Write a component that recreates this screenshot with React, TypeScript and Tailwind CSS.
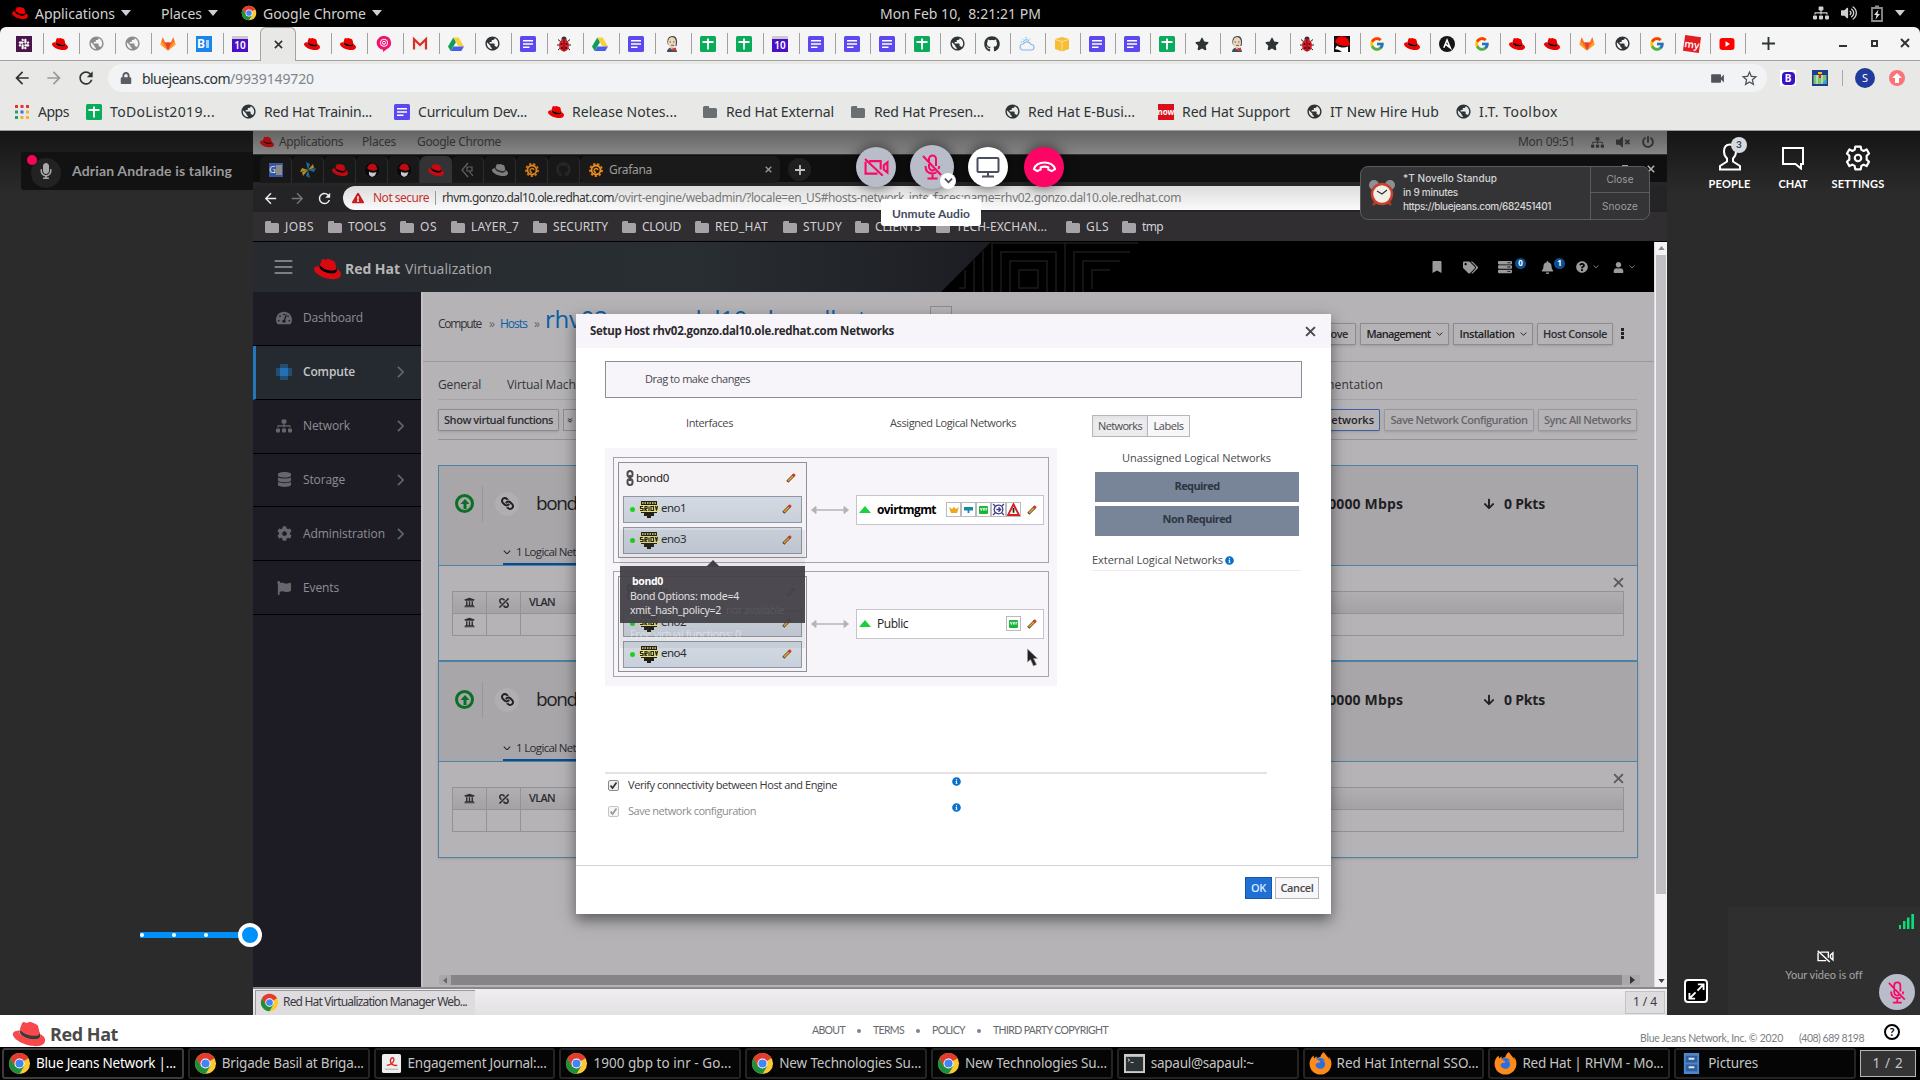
import React, { useLayoutEffect, useRef } from 'react';
import { FaCog, FaDatabase, FaFlag, FaGithub, FaLink, FaLock, FaSlack, FaStar, FaTachometerAlt, FaUniversity, FaUnlink, FaUser, FaBell, FaBookmark, FaTags, FaQuestionCircle, FaInfoCircle, FaExclamationTriangle, FaSitemap, FaVolumeUp, FaVolumeMute, FaPowerOff, FaArrowDown, FaMicrophone, FaServer, FaFirefoxBrowser } from 'react-icons/fa';
import { FcGoogle } from 'react-icons/fc';
import { MdArrowBack, MdArrowForward, MdPublic, MdRefresh, MdVideocam, MdStarBorder } from 'react-icons/md';

/* Single-line text stretched by letter spacing to a given width. */
function Fit({ w, className = '', children }: { w: number; className?: string; children: React.ReactNode }) {
  const ref = useRef<HTMLSpanElement>(null);
  useLayoutEffect(() => {
    const el = ref.current;
    if (!el) return;
    el.style.letterSpacing = '0px';
    const n = (el.textContent || '').length;
    el.style.letterSpacing = `${(w - el.getBoundingClientRect().width) / n}px`;
  }, [w]);
  return <span ref={ref} className={`inline-block shrink-0 whitespace-pre ${className}`}>{children}</span>;
}

function Hat({ className = 'size-4', color = '#ee0000', band = '#000' }: { className?: string; color?: string; band?: string }) {
  return (
    <svg viewBox="0 50 512 412" className={`shrink-0 ${className}`}>
      <path fill={band} d="M104 196c-12 60 90 150 230 150 60 0 110-20 100-64l-10-48z" />
      <path fill={color} d="M341.52 285.56c33.65 0 82.34-6.94 82.34-47 .22-6.74.86-1.82-20.88-96.24-4.62-19.15-8.68-27.84-42.31-44.65-26.09-13.34-82.92-35.37-99.73-35.37-15.66 0-20.2 20.17-38.87 20.17-18 0-31.31-15.06-48.12-15.06-16.14 0-26.66 11-34.78 33.62-27.5 77.55-26.28 74.27-26.12 78.27 0 24.8 97.64 106.11 228.47 106.11M429 254.84c4.65 22 4.65 24.35 4.65 27.25 0 37.66-42.33 58.56-98 58.56-125.74.08-235.91-73.65-235.91-122.33a49.55 49.55 0 0 1 4.06-19.72C58.56 200.86 0 208.93 0 260.63c0 84.67 200.63 189 359.49 189 121.79 0 152.51-55.08 152.51-98.58 0-34.21-29.59-73.05-82.93-96.24" />
    </svg>
  );
}
function Chrome({ className = 'size-4' }: { className?: string }) {
  return (
    <svg viewBox="0 0 48 48" className={`shrink-0 ${className}`}>
      <circle cx="24" cy="24" r="22" fill="#fbc934" />
      <path fill="#e33b2e" d="M24 24 43 13H24zM5 13a22 22 0 0 1 38 0H24L14 30z" />
      <path fill="#1e8e3e" d="M5 13a22 22 0 0 0 19 33l10-17-10 4-9.5-3.500z" />
      <circle cx="24" cy="24" r="10.500" fill="#fff" />
      <circle cx="24" cy="24" r="8.500" fill="#4285f4" />
    </svg>
  );
}
const Globe = ({ c = 'text-[#2e3436]' }: { c?: string }) => <MdPublic className={`size-[17px] shrink-0 ${c}`} />;
const Doc = () => (
  <svg viewBox="0 0 16 16" className="size-4"><rect width="16" height="16" rx="1.500" fill="#5b48ee" /><path stroke="#fff" strokeWidth="1.600" d="M3 4.800h10M3 8h10M3 11.300h6.500" /></svg>
);
const Sheet = () => (
  <svg viewBox="0 0 16 16" className="size-4"><rect width="16" height="16" rx="1.500" fill="#0bab5c" /><path stroke="#fff" strokeWidth="1.800" d="M2.500 6h11M8 2.500v11" /></svg>
);
const Slack = () => <span className="flex size-4 items-center justify-center bg-[#4a154b] text-white"><FaSlack size={12} /></span>;
const Gitlab = () => (
  <svg viewBox="0 0 16 16" className="size-[17px]"><path fill="#fc6d26" d="M8 15 .5 9 2.700 1.500 5.200 7h5.600l2.500-5.500L15.500 9z" /><path fill="#e24329" d="M8 15 5.200 7h5.600z" /><path fill="#fca326" d="M.5 9 1.800 6 8 15zM15.500 9l-1.300-3L8 15z" /></svg>
);
const BBlue = () => (
  <span className="flex size-4 items-center justify-center bg-[#1a85e8] pr-0.5 font-['Roboto'] text-[12px] font-bold text-white">B<i className="ml-px h-2 w-[3px] bg-[#9fd4ff]" /></span>
);
const Cal = () => (
  <span className="flex size-4 flex-col"><i className="h-[3px] bg-[#c9c9cf]" /><b className="flex h-[13px] items-center justify-center bg-[#4a10c8] font-['Noto_Sans'] text-[10px] font-semibold text-white">10</b></span>
);
const At = () => (
  <svg viewBox="0 0 16 16" className="size-4"><path fill="#f0146e" d="M8 0a6.800 6.800 0 0 1 3 13L7 16v-2.300A6.800 6.800 0 0 1 8 0z" /><circle cx="8" cy="6.800" r="3.600" fill="none" stroke="#fff" strokeWidth="1" /><circle cx="8" cy="6.800" r="1.500" fill="none" stroke="#fff" strokeWidth="1" /></svg>
);
const Gmail = () => (
  <svg viewBox="0 0 16 16" className="size-4"><path fill="#eee" d="M1 2.500h14v11H1z" /><path fill="none" stroke="#d93025" strokeWidth="2.200" d="M2 13.500V3.200L8 9l6-5.800v10.300" /></svg>
);
const Drive = () => (
  <svg viewBox="0 0 16 16" className="size-4"><path fill="#0f9d58" d="M5.300 1.500 0 10.500 2.700 15 8 6z" /><path fill="#fbcf3a" d="M5.300 1.500h5.400l5.300 9h-5.400z" /><path fill="#4a5fe8" d="M5.400 10.500H16L13.300 15H2.700z" /></svg>
);
const Bug = () => (
  <svg viewBox="0 0 16 16" className="size-4"><path stroke="#222" strokeWidth="1" d="M2 3.500 5 6M14 3.500 11 6M1 9h3M15 9h-3M2 14l3-2.500M14 14l-3-2.500" /><circle cx="8" cy="3" r="2.500" fill="#333" /><ellipse cx="8" cy="9.300" rx="5" ry="6.200" fill="#d8202c" /><path stroke="#500" strokeWidth=".8" d="M8 3.500v12" /><g fill="#400"><circle cx="5.500" cy="8" r="1" /><circle cx="10.500" cy="8" r="1" /><circle cx="6" cy="12" r="1" /><circle cx="10" cy="12" r="1" /></g></svg>
);
const Jenkins = () => (
  <svg viewBox="0 0 16 16" className="size-4"><path fill="#33444d" d="M4 9C2 3 5 0 8.500 0S14 3 12.500 10z" /><ellipse cx="8" cy="6.500" rx="4" ry="5.600" fill="#f0d6b7" /><path fill="#335061" d="M3 16c0-3 2-4.500 5-4.500s5 1.500 5 4.500z" /><path fill="#fff" d="M6 11.500h5l-2 3z" /><path fill="#d33833" d="M8 12.500 12 11.500v3.500L8 14zM8 13l-2-1v2z" /><path stroke="#444" strokeWidth=".8" d="M5.500 6h1.500M9 6h1.500M7 9.300h3" /></svg>
);
const Cloud = () => (
  <svg viewBox="0 0 16 16" className="size-4" fill="none"><path stroke="#8fb4f4" strokeWidth="1.200" d="M4 14a3 3 0 0 1 0-6 4.500 4.500 0 0 1 8 .5 2.700 2.700 0 0 1 .5 5.500z" /><path stroke="#54c8dc" d="M4 6a3.500 3.500 0 0 1 6-1M7 1v1.500M3 2.500l1 1M11 2.500l-1 1M1.500 6H3" /></svg>
);
const Box = () => (
  <svg viewBox="0 0 16 16" className="size-4"><path fill="#f6bd35" d="M1 3 8 1l7 2v10l-7 2.500L1 13z" /><path stroke="#fce8b0" strokeWidth=".8" fill="none" d="M1 3.500 8 5.500l7-2M8 5.500V15" /></svg>
);
const Shadow = () => (
  <svg viewBox="0 0 16 16" className="size-4"><path fill="#111" d="M0 0h16v16H0z" /><path fill="#fff" d="M3 9.500c3 2.500 8 2.500 11 1V16H8l-3-2-4-1z" /><path fill="#e00" d="M3 2c3-3 9-2 11 1 1 3 2 4 2 6C12 11 5 10 1 6z" /></svg>
);
const Shadowman = () => (
  <svg viewBox="0 0 16 16" className="size-4"><circle cx="8" cy="8" r="7" fill="#080808" /><path fill="#ddd" d="M5 9.500c2 1.500 5 1.500 7.500.5L11 13.500l-3 1.500-3-2z" /><path fill="#d40a12" d="M5 3c2-2 6-1.500 7 .5l1.500 4C10.500 9.500 6 9 3 6z" /></svg>
);
const Ansible = () => (
  <svg viewBox="0 0 16 16" className="size-4"><circle cx="8" cy="8" r="8" fill="#151515" /><path fill="none" stroke="#fff" strokeWidth="1.600" d="M4.800 11.800 8 4l3.200 7.800L6.300 8" /></svg>
);
const My = () => <span className="flex size-4 rotate-[8deg] items-center justify-center bg-[#e51b23] font-['Noto_Sans'] text-[10px] font-semibold text-white">my</span>;
const Tube = () => (
  <svg viewBox="0 0 16 16" className="size-4"><rect x=".5" y="2" width="15" height="12" rx="3" fill="#f00" /><path fill="#fff" d="m6.500 5.300 4.500 2.700-4.500 2.700z" /></svg>
);
const Star = () => <FaStar size={14} className="text-[#2e3436]" />;
const Tri = ({ className = '' }: { className?: string }) => (
  <svg viewBox="0 0 10 6" className={`h-[6px] w-[10px] shrink-0 ${className}`}><path fill="#cfcfcf" d="M0 0h10L5 6z" /></svg>
);
const Cross = ({ className = '', s = 2 }: { className?: string; s?: number }) => (
  <svg viewBox="0 0 10 10" className={`shrink-0 ${className}`} fill="none" stroke="currentColor" strokeWidth={s}><path d="m1 1 8 8M9 1 1 9" /></svg>
);
const Chev = ({ className = '' }: { className?: string }) => (
  <svg viewBox="0 0 10 6" className={`shrink-0 ${className}`} fill="none" stroke="currentColor" strokeWidth="1.400"><path d="m1 .8 4 4 4-4" /></svg>
);
const CamOff = ({ className = '' }: { className?: string }) => (
  <svg viewBox="0 0 24 18" className={className} fill="none" stroke="currentColor" strokeWidth="2"><path d="M5 3h11v8M13 15H1.500V3.500M1 1l17 16M19 7l3.500-3v10L19 11z" /></svg>
);
const MicOff = ({ className = '' }: { className?: string }) => (
  <svg viewBox="0 0 20 26" className={className} fill="none" stroke="currentColor" strokeWidth="2"><path d="M7 9V5a3.500 3.500 0 0 1 7 0v7M7 10v3a3.500 3.500 0 0 0 5.500 2.800M3.500 12c0 5 3 7.500 7 7.500 1.800 0 3-.4 4-1.200M16.500 15l.9-3M10.500 20v4.500M5.500 24.500h10M1 2l18 19" /></svg>
);

function TopBar() {
  return (
    <div className="flex h-[27px] items-center bg-black pb-px pl-3 font-['Noto_Sans'] text-[14px] text-[#d0d0d0]">
      <Hat className="h-[14px] w-4" />
      <Fit w={80} className="ml-[7px]">Applications</Fit><Tri className="ml-1.5" />
      <Fit w={41} className="ml-[30px]">Places</Fit><Tri className="ml-1.5" />
      <Chrome className="ml-[23px] size-4" /><Fit w={103} className="ml-[6px]">Google Chrome</Fit><Tri className="ml-1.5" />
      <Fit w={161} className="ml-[498px]">Mon Feb 10,  8:21:21 PM</Fit>
      <div className="ml-auto flex items-center pr-[15px]">
        <FaSitemap size={16} /><FaVolumeUp size={16} className="ml-3" />
        <svg viewBox="0 0 12 17" className="ml-[14px] h-[17px] w-3" fill="none"><path stroke="#8c8c8c" strokeWidth="1.800" d="M4 1.500h4M1 3h10v13H1z" /><path fill="#ddd" d="M7.500 4.500 3 10h2.500L4.500 14.500 9 9H6.500z" /></svg>
        <Tri className="ml-3" />
      </div>
    </div>
  );
}

const g = 'text-[#8c8c8c]';
const wideTabs = [<Slack />, <Hat />, <Globe c={g} />, <Globe c={g} />, <Gitlab />, <BBlue />, <Cal />, null, <Hat />, <Hat />, <At />, <Gmail />, <Drive />, <Globe />, <Doc />, <Bug />, <Drive />, <Doc />, <Jenkins />, <Sheet />, <Sheet />, <Cal />, <Doc />];
const slimTabs = [<Doc />, <Doc />, <Sheet />, <Globe />, <FaGithub size={16} />, <Cloud />, <Box />, <Doc />, <Doc />, <Sheet />, <Star />, <Jenkins />, <Star />, <Bug />, <Shadow />, <FcGoogle size={16} />, <Hat />, <Ansible />, <FcGoogle size={16} />, <Hat />, <Hat />, <Gitlab />, <Globe />, <FcGoogle size={16} />, <My />, <Tube />];

function Tabs() {
  return (
    <div className="flex h-[34px] bg-black">
      <div className="flex h-[34px] w-full rounded-t-[6px] border-b border-[#a3a3a1] bg-[#f5f5f5] pl-2 text-[#2e3436]">
        {wideTabs.map((icon, i) =>
          icon ? (
            <div key={i} className="flex w-9 shrink-0 items-center pl-2">
              <div className="flex w-4 justify-center">{icon}</div>
              {i !== 6 && <i className="ml-auto h-[21px] w-px bg-[#a0a0a0]" />}
            </div>
          ) : (
            <div key={i} className="flex h-[34px] w-9 shrink-0 items-center justify-center rounded-t-[6px] border border-b-0 border-[#a3a3a1] bg-[#e8e8e6]">
              <Cross className="size-[9px]" s={1.8} />
            </div>
          ),
        )}
        {slimTabs.map((icon, i) => (
          <div key={i} className="flex w-[35px] shrink-0 items-center pl-2">
            <div className="flex w-4 justify-center">{icon}</div>
            <i className="ml-auto h-[21px] w-px bg-[#a0a0a0]" />
          </div>
        ))}
        <svg viewBox="0 0 14 14" className="mt-[10px] ml-[16px] size-[13px]" stroke="currentColor" strokeWidth="2"><path d="M7 0v14M0 7h14" /></svg>
        <i className="mt-[18px] ml-[64px] h-[2px] w-2 bg-[#2e3436]" />
        <i className="mt-[13px] ml-[24px] size-[7px] border-2 border-[#2e3436]" />
        <Cross className="mt-[11px] ml-[22px] size-[10px]" s={2} />
      </div>
    </div>
  );
}

function Toolbar() {
  return (
    <div className="flex h-8 items-center bg-[#e8e8e6] pt-[2px] pl-3 font-['Noto_Sans'] text-[14px] text-[#2e3436]">
      <MdArrowBack size={20} /><MdArrowForward size={20} className="ml-3 text-[#9a9a9a]" /><MdRefresh size={20} className="ml-3" />
      <div className="ml-[12px] flex h-7 w-[1659px] items-center rounded-full bg-[#f1f3f4] pl-[12px]">
        <FaLock size={12} className="text-[#5a5d66]" />
        <Fit w={88} className="ml-[10px]">bluejeans.com</Fit><Fit w={84} className="text-[#80858a]">/9939149720</Fit>
        <MdVideocam size={17} className="ml-auto text-[#50545a]" /><MdStarBorder size={19} className="mr-[8px] ml-[14px] text-[#50545a]" />
      </div>
      <span className="ml-[13px] flex size-4 items-center justify-center bg-white"><b className="flex size-[13px] items-center justify-center rounded-sm bg-[#3a10c8] text-[10px] text-white">B</b></span>
      <svg viewBox="0 0 16 16" className="ml-4 size-4"><path fill="#1c3f8c" d="M0 0h16v16H0z" /><path fill="#7cc36a" d="M1.500 5h13v9h-13z" /><path fill="#3f9be0" d="m9 14 5.500-5v5z" /><path stroke="#eee" d="M5 5v9M10 5v9" /><path fill="#f4c327" d="M6 2h4v2H6z" /><path fill="#d22" d="M7 4h2v4H7z" /></svg>
      <i className="ml-[14px] h-4 w-px bg-[#a9a9a9]" />
      <span className="ml-3 flex size-5 items-center justify-center rounded-full bg-[#1f3b9c] text-[11px] text-white">S</span>
      <span className="ml-[14px] flex size-4 items-center justify-center rounded-full bg-[#fb7377]"><svg viewBox="0 0 10 10" className="size-2.5" fill="#fff"><path d="M5 0l5 5H7v5H3V5H0z" /></svg></span>
    </div>
  );
}

const Apps = () => (
  <svg viewBox="0 0 14 14" className="size-[14px]"><path fill="#e0392c" d="M0 0h3v3H0zM5.500 0h3v3h-3zM11 0h3v3h-3z" /><path fill="#1ea362" d="M0 5.500h3v3H0z" /><path fill="#4a66e8" d="M5.500 5.500h3v3h-3z" /><path fill="#f4b32c" d="M11 5.500h3v3h-3zM5.500 11h3v3h-3zM11 11h3v3h-3z" /><path fill="#1ea362" d="M0 11h3v3H0z" /></svg>
);
const Fold = ({ className = '' }: { className?: string }) => (
  <svg viewBox="0 0 14 12" className={`h-[12px] w-[14px] ${className}`} fill="currentColor"><path d="M0 1.500Q0 0 1.500 0H6v2h6.500Q14 2 14 3.500v7q0 1.500-1.500 1.500h-11Q0 12 0 10.500z" /></svg>
);
const marks: [React.ReactNode, string, number, string][] = [
  [<Apps />, 'Apps', 31, 'w-[72px]'],
  [<Sheet />, 'ToDoList2019...', 105, 'w-[154px]'],
  [<Globe />, 'Red Hat Trainin...', 108, 'w-[154px]'],
  [<Doc />, 'Curriculum Dev...', 109, 'w-[154px]'],
  [<Hat />, 'Release Notes...', 105, 'w-[154px]'],
  [<Fold className="text-[#6a6f73]" />, 'Red Hat External', 108, 'w-[148px]'],
  [<Fold className="text-[#6a6f73]" />, 'Red Hat Presen...', 110, 'w-[154px]'],
  [<Globe />, 'Red Hat E-Busi...', 107, 'w-[154px]'],
  [<span className="flex size-4 items-center justify-center bg-[#d9101c] text-[8px] font-bold text-white">now</span>, 'Red Hat Support', 108, 'w-[148px]'],
  [<Globe />, 'IT New Hire Hub', 109, 'w-[149px]'],
  [<Globe />, 'I.T. Toolbox', 79, 'w-[149px]'],
];
function Bookmarks() {
  return (
    <div className="flex h-[38px] items-center border-b border-[#9a9a98] bg-[#e8e8e6] pl-[14px] font-['Noto_Sans'] text-[14px] text-[#2e3436]">
      {marks.map(([icon, t, w, cls]) => (
        <div key={t} className={`flex shrink-0 items-center ${cls}`}>
          <div className="flex w-4 justify-center">{icon}</div>
          <Fit w={w} className="ml-2">{t}</Fit>
        </div>
      ))}
    </div>
  );
}

const Grafana = () => (
  <svg viewBox="0 0 16 16" className="size-4" fill="none"><circle cx="8" cy="8" r="6" stroke="#e8761c" strokeWidth="2" strokeDasharray="2.300 1.800" /><circle cx="8" cy="8" r="4.500" stroke="#e9951c" strokeWidth="1.800" /><path stroke="#e8861c" strokeWidth="1.500" d="M10 8a2 2 0 1 0-2 2.500" /></svg>
);
const remoteTabs = [
  <span className="flex size-3.5 items-center justify-center bg-[#3e5fb0] text-[9px] text-white">G<i className="h-2.5 w-1.5 bg-[#9a9a9a]" /></span>,
  <svg viewBox="0 0 16 16" className="size-4"><path fill="#2272a8" d="M8 8 6 0l4 2zM8 8l8-2-2 4zM8 8l2 8-4-2z" /><path fill="#c09a2c" d="M8 8 0 10l2-4zM8 8l5-6 1 4zM8 8l-5 6-1-4z" /></svg>,
  <Hat color="#d40a12" />,
  <Shadowman />,
  <Shadowman />,
  <Hat color="#c40a12" />,
  <svg viewBox="0 0 16 16" className="size-4" fill="none" stroke="#6c6c6c" strokeWidth="1.200"><path d="M8 1 2 8l6 7M7 5h5v4H7zM9 9l4 5" /></svg>,
  <Hat color="#8b8b8b" band="#333" />,
  <Grafana />,
  <FaGithub size={15} className="text-[#2a2a2a]" />,
];
function RemoteBrowser() {
  const folders: [string, number, string][] = [['JOBS', 29, 'w-[63px]'], ['TOOLS', 38, 'w-[72px]'], ['OS', 17, 'w-[51px]'], ['LAYER_7', 48, 'w-[82px]'], ['SECURITY', 55, 'w-[89px]'], ['CLOUD', 39, 'w-[73px]'], ['RED_HAT', 53, 'w-[88px]'], ['STUDY', 39, 'w-[72px]'], ['CLIENTS', 46, 'w-[81px]'], ['TECH-EXCHAN...', 91, 'w-[130px]'], ['GLS', 23, 'w-[56px]'], ['tmp', 21, 'w-[56px]']];
  return (
    <div className="flex h-[111px] flex-col font-['Noto_Sans']">
      <div className="flex h-[23px] items-center bg-gradient-to-b from-[#646464] to-[#868686] pb-px pl-[7px] text-[12px] text-[#323232]">
        <Hat className="h-3 w-3.5" color="#a80d12" band="#400" />
        <Fit w={64} className="ml-[5px]">Applications</Fit><Fit w={34} className="ml-[19px]">Places</Fit><Fit w={84} className="ml-[21px]">Google Chrome</Fit>
        <div className="ml-auto flex items-center pr-[13px]"><Fit w={57}>Mon 09:51</Fit><FaSitemap size={13} className="ml-4" /><FaVolumeMute size={14} className="ml-3" /><FaPowerOff size={12} className="ml-3" /></div>
      </div>
      <div className="flex h-[32px] items-start border-t border-[#333] border-b-4 border-b-[#262628] bg-[#0f0f10] pl-[7px] pt-px">
        {remoteTabs.map((icon, i) => (
          <div key={i} className={i === 5 ? 'flex h-[27px] w-8 shrink-0 items-center justify-center rounded-t-md bg-[#333336]' : 'flex h-[27px] w-8 shrink-0 items-center justify-center rounded-t-md border-r border-[#303030] bg-[#1a1a1b] opacity-90'}>{icon}</div>
        ))}
        <div className="flex h-[27px] w-[200px] items-center rounded-md bg-[#1a1a1b] pl-2 text-[12px] text-[#9a9a9a]">
          <Grafana /><Fit w={43} className="ml-[5px]">Grafana</Fit><Cross className="mr-2 ml-auto size-[7px]" s={1.8} />
        </div>
        <span className="mt-0.5 ml-2 flex size-[23px] items-center justify-center rounded-full bg-[#1f1f20] text-[#c0c0c0]"><svg viewBox="0 0 10 10" className="size-2.5" stroke="currentColor" strokeWidth="1.800"><path d="M5 0v10M0 5h10" /></svg></span>
        <i className="mt-[9px] ml-auto size-[6px] border-2 border-[#a0a0a0]" /><Cross className="mt-[9px] mr-[12px] ml-[19px] size-2 text-[#b0b0b0]" />
      </div>
      <div className="flex h-[26px] items-start bg-[#242426] pl-[9px] text-[12px] text-[#eee]">
        <MdArrowBack size={17} className="mt-1" /><MdArrowForward size={17} className="mt-1 ml-2.5 text-[#777]" /><MdRefresh size={17} className="mt-1 ml-2.5" />
        <div className="ml-[10px] flex h-[24px] w-[1250px] items-center rounded-full bg-gradient-to-b from-[#ddd] to-[#fafafa] pl-[9px]">
          <FaExclamationTriangle size={12} className="text-[#c81e1e]" />
          <Fit w={56} className="ml-[9px] text-[#c5322c]">Not secure</Fit><i className="mx-[6px] h-[14px] w-px bg-[#999]" />
          <Fit w={172} className="text-[#333]">rhvm.gonzo.dal10.ole.redhat.com</Fit><Fit w={567} className="text-[#777]">/ovirt-engine/webadmin/?locale=en_US#hosts-network_interfaces;name=rhv02.gonzo.dal10.ole.redhat.com</Fit>
        </div>
      </div>
      <div className="flex h-[30px] items-center border-b border-black bg-[#302e31] pl-[12px] text-[12px] text-[#d2d0d4]">
        {folders.map(([t, w, cls]) => (
          <div key={t} className={`flex shrink-0 items-center ${cls}`}><Fold className="text-[#a5a3a8]" /><Fit w={w} className="ml-[6px]">{t}</Fit></div>
        ))}
      </div>
    </div>
  );
}

function AppHeader() {
  return (
    <div className="relative flex h-[50px] shrink-0 items-center bg-black text-[#9a9a9a]">
      <svg viewBox="253 242 1401 50" className="absolute inset-0 h-[50px] w-[1401px]" fill="none" stroke="#1c1a1e" strokeWidth="1.500">
        <defs><linearGradient id="head"><stop offset="0" stopColor="#272b2f" /><stop offset=".6" stopColor="#292e33" /><stop offset="1" stopColor="#1c1d22" /></linearGradient></defs>
        <path fill="url(#head)" stroke="none" d="M253 242h738l-50 50H253z" />
        <path d="M992 241v51M1065 241v51M992 243h146M1001 292v-40h55v40M1010 292v-31h37v31M1019 270h19v18h-19zM1074 292v-40h56M1083 292v-31h37M1092 289v-19h18M983 251v41M974 260v32M965 270v18h-6" />
      </svg>
      <div className="relative flex w-full items-center">
        <svg viewBox="0 0 19 15" className="mb-0 ml-[21px] h-[14px] w-[19px]" stroke="#9c9c9c" strokeWidth="1.500"><path d="M0 1h19M0 7.500h19M0 14h19" /></svg>
        <Hat className="mt-[3px] ml-[21px] h-[22px] w-[27px]" color="#d80a10" />
        <Fit w={55} className="mt-[3px] ml-[4px] font-['Open_Sans'] text-[14px] font-bold text-[#b8b8b8]">Red Hat</Fit>
        <Fit w={87} className="mt-[3px] ml-[5px] font-['Open_Sans'] text-[14px] text-[#aaa]">Virtualization</Fit>
        <div className="ml-auto flex items-center pr-[19px]">
          <FaBookmark size={12} /><FaTags size={15} className="ml-[20px]" /><FaServer size={14} className="ml-[20px]" />
          <b className="mb-2 ml-[3px] flex size-[11px] items-center justify-center rounded-full bg-[#0e4f94] text-[8px] text-white">0</b>
          <FaBell size={13} className="ml-[15px]" /><b className="mb-2 flex size-[11px] items-center justify-center rounded-full bg-[#0e4f94] text-[8px] text-white">1</b>
          <FaQuestionCircle size={12} className="ml-[11px]" /><Chev className="ml-[5px] w-[6px]" /><FaUser size={11} className="ml-[14px]" /><Chev className="ml-[5px] w-[6px]" />
        </div>
      </div>
    </div>
  );
}

function Sidebar() {
  const chip = <svg viewBox="0 0 16 16" className="size-4" stroke="#2470b4"><path fill="#2470b4" d="M4 4h8v8H4z" /><path strokeWidth="1" d="M5 0v3M7 0v3M9 0v3M11 0v3M5 13v3M7 13v3M9 13v3M11 13v3M0 5h3M0 7h3M0 9h3M0 11h3M13 5h3M13 7h3M13 9h3M13 11h3" /></svg>;
  const items: [React.ReactNode, string, number, boolean][] = [
    [<FaTachometerAlt size={16} />, 'Dashboard', 60, false],
    [chip, 'Compute', 52, true],
    [<FaSitemap size={16} />, 'Network', 47, true],
    [<FaDatabase size={15} />, 'Storage', 42, true],
    [<FaCog size={15} />, 'Administration', 82, true],
    [<FaFlag size={14} />, 'Events', 36, false],
  ];
  return (
    <div className="w-[168px] shrink-0 bg-[#1d1c25] font-['Open_Sans'] text-[12px] text-[#8e8e94]">
      {items.map(([icon, t, w, more]) => (
        <div key={t} className={t === 'Compute' ? 'flex h-[54px] items-center border-b border-l-[3px] border-b-black border-l-[#2378bd] bg-[#252a30] pl-5 font-semibold text-[#c6c6c8]' : 'flex h-[53.800px] items-center border-b border-black pl-[23px]'}>
          <div className="flex w-4 justify-center text-[#66666c]">{icon}</div>
          <Fit w={w} className="ml-[11px]">{t}</Fit>
          {more && <svg viewBox="0 0 8 14" className="mr-[17px] ml-auto h-[12px] w-[7px]" fill="none" stroke="#67676d" strokeWidth="1.800"><path d="m1 1 6 6-6 6" /></svg>}
        </div>
      ))}
    </div>
  );
}

const Btn = ({ w, children, className = '', outer }: { w: number; children: string; className?: string; outer: string }) => (
  <div className={`flex h-[22px] shrink-0 items-center justify-center gap-[5px] rounded-[1px] border font-semibold shadow-sm ${outer} ${className}`}>
    <Fit w={w}>{children}</Fit>
  </div>
);

function Card({ first }: { first: boolean }) {
  return (
    <div className={first ? 'h-[196px] w-[1200px] border border-[#4d82a6]' : 'h-[197px] w-[1200px] border border-[#4d82a6] shadow'}>
      <div className="flex h-[100px] flex-col border-b border-[#4d82a6] bg-[#a8a6a9]">
        <div className="flex h-[75px] items-center text-[#1f1f24]">
          <span className="ml-4 flex size-[19px] items-center justify-center rounded-full border-[3px] border-[#0b7026] text-[#0b7026]"><svg viewBox="0 0 10 10" className="size-2.5" fill="currentColor"><path d="M5 0l4.500 5H6.500v5h-3V5H.5z" /></svg></span>
          <i className="ml-[8px] h-9 w-px bg-[#98969a]" />
          <span className="ml-[12px] flex size-6 items-center justify-center rounded-full bg-[#b0aeb1]"><FaLink size={13} className="rotate-90" /></span>
          <Fit w={50} className="ml-[17px] font-['Open_Sans'] text-[19px]">bond0</Fit>
          <div className="ml-auto flex items-center font-['Open_Sans'] text-[14px] font-bold">
            <Fit w={83}>20000 Mbps</Fit>
            <FaArrowDown size={12} className="ml-20" /><Fit w={41} className="mr-[92px] ml-[9px]">0 Pkts</Fit>
          </div>
        </div>
        <div className="ml-[64px] flex w-[140px] grow items-center border-b-2 border-[#0b4c90] font-['Open_Sans'] text-[11.500px] text-[#2c2c30]">
          <Chev className="w-2" /><Fit w={84} className="ml-[5px]">1 Logical Network</Fit>
        </div>
      </div>
      <div className="flex h-[25px] items-start justify-end pt-[11px] pr-[13px] text-[#5c5a5e]"><Cross className="size-[11px]" s={1.700} /></div>
      <div className="mx-[13px] h-[45px] border border-[#949296] font-['Open_Sans'] text-[11px] text-[#2c2c30]">
        <div className="flex h-[22px] border-b border-[#949296] bg-gradient-to-b from-[#b0aeb1] to-[#a4a2a5]">
          <div className="flex w-[34px] items-center justify-center border-r border-[#949296]"><FaUniversity size={11} /></div>
          <div className="flex w-[34px] items-center justify-center border-r border-[#949296]"><FaUnlink size={10} className="rotate-90" /></div>
          <div className="flex items-center pl-[8px]"><Fit w={26} className="font-semibold">VLAN</Fit></div>
        </div>
        <div className="flex h-[21px]">
          <div className="flex w-[34px] items-start justify-center border-r border-[#949296] pt-[3px]">{first && <FaUniversity size={11} />}</div>
          <div className="w-[34px] border-r border-[#949296]" />
        </div>
      </div>
    </div>
  );
}

function HostPage() {
  const line = 'border-[#8d8b8f] text-[#2e2e33]';
  return (
    <div className="flex w-[1233px] flex-col border-l-2 border-[#c2c0c4] bg-[#b5b3b6] font-['Open_Sans'] text-[11px] text-[#333338]">
      <div className="flex h-[70px] border-b border-[#9a989c] pr-[8px] pl-[15px]">
        <div className="mt-[24px] flex h-4 items-center text-[12px]"><Fit w={43}>Compute</Fit><span className="ml-2 text-[#666]">»</span><Fit w={27} className="ml-[5px] text-[#0a5ea5]">Hosts</Fit><span className="ml-[7px] text-[#666]">»</span></div>
        <div className="mt-[11px] ml-[5px] flex h-8 items-center text-[24px] text-[#0a5ea5]"><Fit w={375}>rhv02.gonzo.dal10.ole.redhat.com</Fit><i className="mb-1 ml-[10px] size-[22px] border border-[#8d8b8f]" /></div>
        <div className="mt-[31px] ml-auto flex gap-1 font-semibold text-[#222]">
          <Btn w={40} outer="w-[56px]" className={line}>Remove</Btn>
          <div className="flex h-[22px] w-[89px] items-center justify-center gap-[5px] border border-[#8d8b8f] shadow-sm"><Fit w={64}>Management</Fit><Chev className="w-[7px]" /></div>
          <div className="flex h-[22px] w-[80px] items-center justify-center gap-[5px] border border-[#8d8b8f] shadow-sm"><Fit w={55}>Installation</Fit><Chev className="w-[7px]" /></div>
          <Btn w={64} outer="w-[76px]" className={line}>Host Console</Btn>
          <div className="ml-[4px] flex w-[6px] flex-col gap-[1px] pt-[5px]"><i className="size-[3px] bg-[#222]" /><i className="size-[3px] bg-[#222]" /><i className="size-[3px] bg-[#222]" /></div>
          <i className="w-[15px]" />
        </div>
      </div>
      <div className="mr-[17px] ml-[15px] flex h-[38px] items-center border-b border-[#a5a3a7] pt-[8px] text-[12px]">
        <Fit w={43}>General</Fit><Fit w={91} className="ml-[26px]">Virtual Machines</Fit><Fit w={94} className="mr-[254px] ml-auto">Instrumentation</Fit>
      </div>
      <div className="mr-[17px] ml-[15px] flex h-[40px] gap-1 border-b border-[#949296] pt-[9px]">
        <Btn w={109} outer="w-[121px]" className={line}>Show virtual functions</Btn>
        <div className="flex h-[22px] w-[100px] items-center border border-[#8d8b8f] pl-1"><span className="rotate-90">»</span></div>
        <i className="grow" />
        <Btn w={112} outer="w-[124px]" className="border-[#3c62a8] text-[#222] shadow-[0_0_2px_#3c62a8]">Setup Host Networks</Btn>
        <Btn w={137} outer="w-[150px]" className="border-[#99979b] text-[#66656a]">Save Network Configuration</Btn>
        <Btn w={87} outer="w-[99px]" className="border-[#99979b] text-[#66656a]">Sync All Networks</Btn>
      </div>
      <div className="mt-[25px] ml-[15px]"><Card first /><Card first={false} /></div>
      <div className="mt-auto mb-[2px] ml-[16px] flex h-[10px] w-[1201px] items-center bg-[#aaa8ab]">
        <svg viewBox="0 0 5 8" className="mx-[4px] h-[7px] w-[4px]" fill="#666"><path d="M5 0v8L0 4z" /></svg>
        <i className="h-[10px] w-[1171px] bg-[#868486]" />
        <svg viewBox="0 0 5 8" className="ml-[8px] h-[8px] w-[5px]" fill="#333"><path d="M0 0v8l5-4z" /></svg>
      </div>
    </div>
  );
}

const Pencil = ({ className = '' }: { className?: string }) => (
  <svg viewBox="0 0 10 10" className={`size-[10px] shrink-0 ${className}`}><path stroke="#5a4020" strokeWidth="3" d="M1.300 8.700 8.200 1.800" /><path stroke="#e5a33a" strokeWidth="1.700" d="M2 8l5-5" /><path stroke="#d93a20" strokeWidth="2.600" d="M7 3l1.800-1.800" /></svg>
);
const Nic = ({ name }: { name: string }) => (
  <div className="flex h-[27px] w-[179px] items-center border border-[#8f97a6] bg-gradient-to-b from-[#d3dae3] to-[#c8d0db] pl-[6px]">
    <i className="size-[5px] rounded-full bg-[#1fd01f]" />
    <svg viewBox="0 0 20 17" className="ml-1 h-[17px] w-[20px]"><path fill="#222015" d="M2 0h16v12h-3v3h-3v2H8v-2H5v-3H2z" /><path fill="#e6e08a" d="M0 4h20v7H0z" /><path stroke="#b8b05c" strokeWidth="2" strokeDasharray="1.500 1" d="M3 2h14" /><path fill="none" stroke="#2a2812" strokeWidth="1.200" d="M4 5.500H1.500v2H4v2H1M6 10V5.500h2v2H6l2 2.500M10 5.500v4.500M12 5.500h2.500v4H12zM16.500 5l1 4.500 1-4.500" /></svg>
    <Fit w={25} className="mb-[4px] ml-[2px] font-['Noto_Sans'] text-[11.500px] text-[#2a2d33]">{name}</Fit>
    <Pencil className="mr-[9px] mb-[2px] ml-auto" />
  </div>
);
const Vms = () => <span className="flex h-[15px] w-[15px] items-center justify-center border border-[#bbb] bg-white"><i className="flex h-[8px] w-[9px] items-center justify-center rounded-[1px] bg-[#19b43a]"><svg viewBox="0 0 9 5" className="w-[8px]" fill="none" stroke="#fff"><path d="m.5 1 1 3 1-3M4 4V1.500h1.500V4M7 4V1.500h1.500" /></svg></i></span>;
const role = 'flex h-[15px] w-[15px] items-center justify-center border border-[#bbb] bg-white';

function BondGroup({ bond, nics, net, roles }: { bond: string; nics: string[]; net: string; roles: boolean }) {
  return (
    <div className="flex h-[106px] w-[436px] items-center border border-[#a5a3aa] pl-[4px]">
      <div className="flex h-[96px] w-[189px] shrink-0 flex-col border border-[#908e96] bg-[#f4f2f5] pl-[4px]">
        <div className="flex h-[33px] items-center pb-[3px]">
          <svg viewBox="0 0 8 16" className="ml-[3px] h-4 w-[8px]" fill="none" stroke="#4c4c4c" strokeWidth="2"><rect x="1.500" y="1" width="5" height="6" rx="2.500" /><rect x="1.500" y="9" width="5" height="6" rx="2.500" /><path d="M4 5v6" /></svg>
          <Fit w={33} className="ml-[2px] font-['Noto_Sans'] text-[11.500px] text-[#222]">{bond}</Fit>
          <Pencil className="mr-[10px] ml-auto" />
        </div>
        <div className="flex flex-col gap-[4px]">{nics.map((n) => <Nic key={n} name={n} />)}</div>
      </div>
      <svg viewBox="0 0 38 8" className="ml-[4px] h-2 w-[38px]" fill="#b5b3b6" stroke="#b5b3b6"><path strokeWidth="1.500" d="M3 4h32" /><path d="M5 .5v7L.5 4zM33 .5v7L37.500 4z" /></svg>
      <div className="ml-[7px] flex h-[30px] w-[188px] items-center border border-[#c6c4ca] bg-white pb-px pl-[2px]">
        <svg viewBox="0 0 12 7" className="h-[7px] w-3" fill="#17d13e"><path d="M0 7h12L6 0z" /></svg>
        {roles ? <Fit w={59} className="ml-[6px] font-['Open_Sans'] text-[12px] font-bold text-black">{net}</Fit> : <Fit w={31} className="ml-[6px] font-['Open_Sans'] text-[12px] text-[#222]">{net}</Fit>}
        <div className="mr-[6px] ml-auto flex">
          {roles && (
            <>
              <span className={role}><svg viewBox="0 0 10 8" className="w-[10px]" fill="#eea81c"><path d="M0 1l3 2 2-2 2 2 3-2-2 6H2z" /></svg></span>
              <span className={role}><svg viewBox="0 0 10 8" className="w-[9px]" fill="#148ba6"><path d="M0 1h10v4H6v3H4V5H0z" /></svg></span>
            </>
          )}
          <Vms />
          {roles && (
            <>
              <span className={role}><svg viewBox="0 0 12 12" className="w-[13px]" fill="none" stroke="#3f3b8f" strokeWidth="1.200"><circle cx="6" cy="6" r="4" /><path d="M1 1l2 2M11 1 9 3M1 11l2-2M11 11 9 9M4 6h4M6 4l2 2-2 2" /></svg></span>
              <span className={role}><svg viewBox="0 0 12 12" className="w-[13px]"><path fill="#fff" stroke="#d42222" strokeWidth="1.800" d="M6 1.200 11 11H1z" /><path stroke="#222" strokeWidth="1.600" d="M6 4.500V9" /></svg></span>
            </>
          )}
        </div>
        <Pencil className="mr-[6px]" />
      </div>
    </div>
  );
}

function Check({ dim = false }: { dim?: boolean }) {
  return (
    <svg viewBox="0 0 11 11" className={dim ? 'size-[11px] opacity-50' : 'size-[11px]'}><rect x=".5" y=".5" width="10" height="10" rx="1.500" fill="#eee" stroke="#8a8a8a" /><path fill="none" stroke="#333" strokeWidth="1.700" d="m2.500 5.500 2 2.500 4-5.500" /></svg>
  );
}

function Modal() {
  return (
    <div className="absolute top-[183px] left-[323px] flex h-[600px] w-[755px] flex-col bg-white font-['Open_Sans'] text-[11px] text-[#4a484c] shadow-[0_6px_14px_rgba(0,0,0,0.5)]">
      <div className="flex h-[34px] shrink-0 items-center bg-[#f7f5f9] pr-[15px] pl-[14px] text-[#2c2a2e]"><Fit w={304} className="text-[11.500px] font-bold">Setup Host rhv02.gonzo.dal10.ole.redhat.com Networks</Fit><Cross className="ml-auto size-[11px] text-[#4a484c]" s={1.800} /></div>
      <div className="mt-[13px] ml-[29px] flex h-[37px] w-[697px] items-center border border-[#8f8d91] bg-[#f7f5f9] pl-[39px]"><Fit w={105}>Drag to make changes</Fit></div>
      <div className="ml-[29px] flex h-[374px]">
        <div className="w-[452px]">
          <div className="flex h-[50px] items-center"><Fit w={47} className="ml-[81px]">Interfaces</Fit><Fit w={126} className="ml-[157px]">Assigned Logical Networks</Fit></div>
          <div className="relative flex h-[238px] flex-col gap-[8px] bg-[#f7f5f9] px-[8px] pt-[9px]">
            <BondGroup bond="bond0" nics={['eno1', 'eno3']} net="ovirtmgmt" roles />
            <BondGroup bond="bond1" nics={['eno2', 'eno4']} net="Public" roles={false} />
            <div className="absolute top-[82px] left-[15px] h-[118px] w-[185px] bg-[#50485a]/8" />
            <div className="absolute top-[180px] left-[25px] flex h-[13px] items-center text-white/45"><Fit w={111}>Free virtual functions: 0</Fit></div>
            <div className="absolute top-[118px] left-[15px] h-[57px] w-[185px] bg-[#434148]/95 pt-[9px] pl-[10px] font-['Noto_Sans'] text-[10.500px] text-[#e2e0e4]">
              <svg viewBox="0 0 14 7" className="absolute -top-[6px] left-[86px] h-[7px] w-[14px]" fill="#434148"><path d="M0 7 7 0l7 7z" /></svg>
              <div className="flex h-[14px] items-center pl-[2px] font-['Open_Sans'] font-bold text-white"><Fit w={31}>bond0</Fit></div>
              <div className="mt-[1px] flex h-[14px] items-center"><Fit w={109}>Bond Options: mode=4</Fit></div>
              <div className="flex h-[13px] items-center"><Fit w={91}>xmit_hash_policy=2</Fit><Fit w={58} className="ml-[5px] text-[#58565e]">not available</Fit></div>
            </div>
            <svg viewBox="0 0 14 20" className="absolute top-[200px] left-[421px] h-[20px] w-[15px]" fill="#222" stroke="#999" strokeWidth=".7"><path d="M1 1v13l3-2.500 3 6.500 3-1.500-3-6h4z" /></svg>
          </div>
        </div>
        <div className="ml-[35px] w-[209px] pt-[17px]">
          <div className="flex h-[22px] text-[#4c4a50]">
            <div className="flex w-[56px] items-center justify-center border border-[#b8b6ba] bg-[#ecebee] shadow-inner"><Fit w={44}>Networks</Fit></div>
            <div className="flex w-[42px] items-center justify-center border border-l-0 border-[#b8b6ba] bg-[#f7f6f8]"><Fit w={30}>Labels</Fit></div>
          </div>
          <div className="mt-[12px] flex h-[18px] items-center pl-[30px]"><Fit w={149}>Unassigned Logical Networks</Fit></div>
          <div className="mt-[5px] ml-[3px] flex h-[30px] w-[204px] items-start justify-center bg-[#788599] pt-1.5 font-bold text-[#2d3542]"><Fit w={45}>Required</Fit></div>
          <div className="mt-[4px] ml-[3px] flex h-[30px] w-[204px] items-start justify-center bg-[#788599] pt-[5px] font-bold text-[#2d3542]"><Fit w={69}>Non Required</Fit></div>
          <div className="mt-[15px] flex h-[20px] items-center border-b border-[#eeeaf0]"><Fit w={131}>External Logical Networks</Fit><FaInfoCircle size={9} className="ml-[2px] text-[#0a70cc]" /></div>
        </div>
      </div>
      <div className="ml-[29px] flex h-[93px] w-[662px] flex-col border-t-2 border-[#e4e2e5]">
        <div className="mt-[1px] flex h-[20px] items-center pl-[3px] text-[#38363a]"><Check /><Fit w={209} className="ml-[9px]">Verify connectivity between Host and Engine</Fit><FaInfoCircle size={9} className="mb-2 ml-[115px] text-[#0a70cc]" /></div>
        <div className="mt-[6px] flex h-[20px] items-center pl-[3px] text-[#8e8c90]"><Check dim /><Fit w={128} className="ml-[9px]">Save network configuration</Fit><FaInfoCircle size={9} className="mb-2 ml-[196px] text-[#0a70cc]" /></div>
      </div>
      <div className="flex h-[49px] items-start justify-end gap-[3px] border-t border-[#d4d2d5] pt-[11px] pr-[12px] font-semibold">
        <div className="flex h-[22px] w-[27px] items-center justify-center border border-[#1258a8] bg-[#1f6fd4] text-[#dceaff]"><Fit w={15}>OK</Fit></div>
        <div className="flex h-[22px] w-[44px] items-center justify-center border border-[#b8b6ba] bg-[#f7f6f8]"><Fit w={33}>Cancel</Fit></div>
      </div>
    </div>
  );
}

function SharedScreen() {
  return (
    <div className="relative flex h-[884px] w-[1414px] shrink-0 flex-col overflow-hidden bg-[#2b2b2b]">
      <RemoteBrowser />
      <div className="flex h-[745px]">
        <div className="flex w-[1401px] flex-col">
          <AppHeader />
          <div className="flex grow"><Sidebar /><HostPage /></div>
        </div>
        <div className="flex w-[13px] flex-col items-center border-l border-[#ddd] bg-[#f4f2f5] py-[4px]">
          <svg viewBox="0 0 8 5" className="h-[4px] w-[7px]" fill="#888"><path d="M0 5h8L4 0z" /></svg>
          <i className="mt-[5px] h-[639px] w-[10px] bg-[#c1bfc3]" />
          <svg viewBox="0 0 8 5" className="mt-auto h-[4px] w-[7px]" fill="#444"><path d="M0 0h8L4 5z" /></svg>
        </div>
      </div>
      <div className="flex h-[28px] items-center border-t-2 border-[#8a888c] bg-gradient-to-b from-[#f0eef1] to-[#e2e0e3] pr-[2px] pl-[2px] font-['Noto_Sans'] text-[12px] text-[#3a3a3e]">
        <div className="flex h-[25px] w-[220px] items-center border-t border-l border-[#999] bg-[#dedcdf] pb-px pl-1"><Chrome className="size-[19px]" /><Fit w={184} className="ml-[4px]">Red Hat Virtualization Manager Web...</Fit></div>
        <div className="ml-auto flex h-[23px] w-[40px] items-center justify-center border border-[#c4c2c6] bg-[#dedcdf] pb-px"><Fit w={24}>1 / 4</Fit></div>
      </div>
      <div className="absolute top-[35px] left-[1107px] flex h-[54px] w-[290px] rounded-lg border border-[#5c5c5e] bg-[#343436] font-['Inter'] text-[10px] text-[#d5d5d5]">
        <svg viewBox="0 0 28 28" className="mt-[12px] ml-[7px] size-[28px] shrink-0"><circle cx="6" cy="6" r="5" fill="#8a9094" /><circle cx="22" cy="6" r="5" fill="#8a9094" /><path stroke="#b03a2a" strokeWidth="2.500" d="m5 26 4-4M23 26l-4-4" /><circle cx="14" cy="15" r="10" fill="#f2efe9" stroke="#c8402e" strokeWidth="2.500" /><path fill="none" stroke="#333" strokeWidth="1.300" d="m9 12 5 3 5-4" /></svg>
        <div className="ml-[7px] flex grow flex-col items-start justify-center gap-[1px] pb-px leading-[13px] font-medium"><Fit w={94}>*T Novello Standup</Fit><Fit w={55}>in 9 minutes</Fit><Fit w={148}>https://bluejeans.com/682451401</Fit></div>
        <div className="flex w-[59px] flex-col border-l border-[#5c5c5e] text-[#9c9c9e]">
          <div className="flex h-[26px] items-center justify-center border-b border-[#5c5c5e]"><Fit w={27}>Close</Fit></div>
          <div className="flex grow items-center justify-center"><Fit w={36}>Snooze</Fit></div>
        </div>
      </div>
      <Modal />
      <div className="absolute top-[14px] left-[603px] flex items-center">
        <span className="flex size-10 items-center justify-center rounded-full bg-[#b9bdc9] text-[#fb0766] shadow-[0_0_14px_#000a]"><CamOff className="w-[25px]" /></span>
        <span className="relative ml-[14px] flex size-11 items-center justify-center rounded-full bg-[#b9bdc9] text-[#fb0766] shadow-[0_0_14px_#000a]">
          <MicOff className="h-[26px]" />
          <span className="absolute right-[-2px] bottom-0 flex size-4 items-center justify-center rounded-full bg-white text-[#444a5c]"><svg viewBox="0 0 10 6" className="w-[9px]" fill="none" stroke="currentColor" strokeWidth="2"><path d="m1 .8 4 4 4-4" /></svg></span>
        </span>
        <span className="ml-[14px] flex size-10 items-center justify-center rounded-full bg-white text-[#4a4f60] shadow-[0_0_14px_#000a]"><svg viewBox="0 0 24 22" className="w-[24px]" fill="none" stroke="currentColor" strokeWidth="2"><rect x="1.500" y="2" width="21" height="14" rx="1" /><path d="M12 16v4M6 20.500h12" /></svg></span>
        <span className="ml-4 flex size-10 items-center justify-center rounded-full bg-[#fd0564] text-white shadow-[0_0_14px_#000a]"><svg viewBox="0 0 26 12" className="w-[25px]" fill="none" stroke="currentColor" strokeWidth="2.200"><path strokeLinejoin="round" d="M2 8.500C3 4 8 1.500 13 1.500S23 4 24 8.500L20.500 10.500 17 9V6.500Q13 5.200 9 6.500V9L5.500 10.500z" /></svg></span>
      </div>
      <div className="absolute top-[68px] left-[628px] flex h-[27px] w-[100px] items-center justify-center rounded-[3px] bg-white pt-[2px] font-['Lato'] text-[12px] font-bold text-[#454b5e]">
        <svg viewBox="0 0 12 6" className="absolute -top-[5px] left-[44px] w-3" fill="#fff"><path d="M0 6 6 0l6 6z" /></svg>
        <Fit w={78}>Unmute Audio</Fit>
      </div>
    </div>
  );
}

function LeftPanel() {
  return (
    <div className="flex w-[253px] shrink-0 flex-col pt-[21px]">
      <div className="ml-[21px] flex h-[38px] items-center rounded-l-[3px] bg-[#121212] pl-[10px]">
        <span className="relative mt-[3px] flex size-[30px] items-center justify-center rounded-full bg-[#222] text-[#a8a8a8]"><FaMicrophone size={16} className="mb-1" /><i className="absolute -top-[3px] -left-[4px] size-[10px] rounded-full bg-[#fb0458]" /></span>
        <Fit w={160} className="mb-[2px] ml-[11px] font-['Lato'] text-[14px] font-bold text-[#9a9a9a]">Adrian Andrade is talking</Fit>
      </div>
      <div className="relative mt-[733px] ml-[140px] flex h-[24px] items-center">
        <div className="flex h-[6px] w-[100px] items-center bg-[#0091f8]"><i className="size-[4px] rounded-full bg-white" /><i className="ml-[28px] size-[4px] rounded-full bg-white" /><i className="ml-[28px] size-[4px] rounded-full bg-white" /></div>
        <i className="absolute left-[98px] z-10 size-6 rounded-full border-[4px] border-white bg-[#0091f8]" />
      </div>
    </div>
  );
}

function RightPanel() {
  const label = "font-['Lato'] text-[11px] font-bold";
  return (
    <div className="flex w-[253px] flex-col text-white">
      <div className="ml-[40px] flex h-[61px] items-end">
        <div className="relative flex w-[45px] flex-col items-center gap-[5px]">
          <svg viewBox="0 0 24 28" className="h-[28px]" fill="none" stroke="#fff" strokeWidth="2"><path d="M12 1.500c-4 0-6 3-6 7 0 3 1.500 5.500 3 7v3L2 23v3.500h20V23l-7-4.500v-3c1.500-1.500 3-4 3-7 0-4-2-7-6-7z" /></svg>
          <span className="absolute -top-[6px] right-[5px] flex size-4 items-center justify-center rounded-full bg-[#d8dae2] font-['Lato'] text-[10px] font-bold text-[#3a3f50]">3</span>
          <Fit w={42} className={label}>PEOPLE</Fit>
        </div>
        <div className="ml-[26px] flex w-[30px] flex-col items-center gap-[6px]">
          <svg viewBox="0 0 24 24" className="h-[24px]" fill="none" stroke="#fff" strokeWidth="2"><path d="M2 2h20v16h-2v4.500L14.500 18H2z" /></svg>
          <Fit w={29} className={label}>CHAT</Fit>
        </div>
        <div className="ml-[23px] flex w-[54px] flex-col items-center gap-[5px]">
          <svg viewBox="0 0 24 24" className="h-[26px]" fill="none" stroke="#fff" strokeWidth="2"><path strokeLinejoin="round" d="m9.500 1.500-.6 3-2.200 1-2.600-1.500-2.300 3.800L4 10v3.500l-2.200 2 2.300 4 2.600-1.400 2.200 1.200.6 3.200h5l.6-3.200 2.200-1.200 2.600 1.400 2.300-4-2.200-2V10l2.200-2.200L19.900 4l-2.600 1.500-2.200-1-.6-3z" /><circle cx="12" cy="12" r="3" /></svg>
          <Fit w={53} className={label}>SETTINGS</Fit>
        </div>
      </div>
      <div className="mt-auto flex h-[108px] items-end">
        <div className="mb-[12px] ml-[17px] flex size-6 items-center justify-center rounded-sm border-2 border-white bg-black"><svg viewBox="0 0 18 18" className="w-[17px]" fill="none" stroke="#fff" strokeWidth="2"><path d="M10.500 1.500h6v6M16 2l-6 6M7.500 16.500h-6v-6M2 16l6-6" /></svg></div>
        <div className="relative ml-[20px] flex h-[108px] w-[192px] flex-col items-center bg-[#2f2f2f]">
          <svg viewBox="0 0 15 15" className="absolute top-[7px] right-[6px] size-[15px]" fill="#06df78"><path d="M0 11h2v4H0zM4 7h2.500v8H4zM8 3.500h2.500V15H8zM12.300 0h2.700v15h-2.700z" /></svg>
          <CamOff className="mt-[43px] ml-[3px] w-[17px]" />
          <Fit w={77} className="mt-[4px] font-['Lato'] text-[11px] text-[#a6a6a6]">Your video is off</Fit>
          <span className="absolute right-[5px] bottom-[5px] flex size-9 items-center justify-center rounded-full bg-[#b9bdc9] text-[#fb0766]"><MicOff className="h-[23px]" /></span>
        </div>
      </div>
    </div>
  );
}

function Footer() {
  return (
    <div className="flex h-8 bg-white pl-3 font-['Lato'] text-[10.500px] text-[#66686c]">
      <Hat className="mt-[6px] h-[26px] w-[34px]" color="#f9484b" band="#3a3a3a" />
      <Fit w={68} className="mt-[5px] ml-[4px] font-['Open_Sans'] text-[18px] leading-[28px] font-bold text-[#4a4a4a]">Red Hat</Fit>
      <div className="ml-[694px] flex h-[32px] items-center">
        <Fit w={33}>ABOUT</Fit><i className="mx-[12px] size-[4px] rounded-full bg-[#7a8598]" /><Fit w={31}>TERMS</Fit><i className="mx-[12px] size-[4px] rounded-full bg-[#7a8598]" /><Fit w={33}>POLICY</Fit><i className="mx-[12px] size-[4px] rounded-full bg-[#7a8598]" /><Fit w={115}>THIRD PARTY COPYRIGHT</Fit>
      </div>
      <div className="mt-[15px] ml-auto flex h-[18px] items-center text-[#7c7e82]"><Fit w={143}>Blue Jeans Network, Inc. © 2020</Fit><Fit w={65} className="ml-4">(408) 689 8198</Fit></div>
      <span className="mt-[9px] mr-[20px] ml-[20px] flex size-4 items-center justify-center rounded-full border-2 border-black text-[11px] font-bold text-black">?</span>
    </div>
  );
}

const Firefox = () => (
  <span className="relative flex size-[23px] shrink-0 items-center justify-center"><i className="absolute size-[14px] rounded-full bg-[#2a6fe0]" /><FaFirefoxBrowser size={23} className="relative text-[#ff8a1c]" /></span>
);
function Taskbar() {
  const big = <Chrome className="size-[23px]" />;
  const items: [React.ReactNode, string, number][] = [
    [big, 'Blue Jeans Network |...', 140],
    [big, 'Brigade Basil at Briga...', 142],
    [<svg viewBox="0 0 22 22" className="size-[21px]"><rect x="1" y="1" width="20" height="20" rx="2" fill="#eee" /><path fill="none" stroke="#d22" strokeWidth="1.400" d="M6 13c8-1 9-8 6-8S8 14 17 13" /><path stroke="#aaa" d="M4 17h14" /></svg>, 'Engagement Journal:...', 139],
    [big, '1900 gbp to inr - Go...', 138],
    [big, 'New Technologies Su...', 142],
    [big, 'New Technologies Su...', 142],
    [<svg viewBox="0 0 22 22" className="size-[21px]"><path fill="#ccc" d="M0 1h22v20H0z" /><path fill="#2c3334" d="M2 4h18v15H2z" /><path fill="none" stroke="#ddd" d="m4 6 2 1.500L4 9M7 10h3" /></svg>, 'sapaul@sapaul:~', 103],
    [<Firefox />, 'Red Hat Internal SSO...', 142],
    [<Firefox />, 'Red Hat | RHVM - Mo...', 141],
    [<svg viewBox="0 0 22 22" className="size-[21px]"><path fill="#4d86c9" d="M3 0h16v22H3z" /><path fill="#2c5f9f" d="M5 3h12v7H5zM5 12h12v7H5z" /><path fill="#e6e6e6" d="M8 5h6v2H8zM8 14h6v2H8z" /></svg>, 'Pictures', 50],
  ];
  return (
    <div className="flex h-[33px] items-center gap-1 bg-black pl-[2px] font-['Noto_Sans'] text-[13.500px] text-[#c4c4c4]">
      {items.map(([icon, t, w], i) => (
        <div key={i} className={i === 0 ? 'flex h-[31px] w-[181.800px] shrink-0 items-center rounded-[3px] border-2 border-[#3c3c3c] bg-[#050505] pl-[4px] text-white' : 'flex h-[31px] w-[181.800px] shrink-0 items-center rounded-[3px] border-2 border-[#242424] bg-[#050505] pl-[4px]'}>
          <div className="flex w-[23px] justify-center">{icon}</div>
          <Fit w={w} className="ml-[5px]">{t}</Fit>
        </div>
      ))}
      <div className="flex h-[27px] w-[56px] items-center justify-center border border-[#b5b5b5] bg-[#343434]"><Fit w={31}>1 / 2</Fit></div>
    </div>
  );
}

export default function App() {
  return (
    <div className="h-[1080px] w-[1920px] overflow-hidden bg-black">
      <TopBar />
      <Tabs />
      <Toolbar />
      <Bookmarks />
      <div className="flex h-[884px] bg-[#2b2b2b] bg-[linear-gradient(#151515,#2b2b2b_62px)]">
        <LeftPanel />
        <SharedScreen />
        <RightPanel />
      </div>
      <Footer />
      <Taskbar />
    </div>
  );
}
